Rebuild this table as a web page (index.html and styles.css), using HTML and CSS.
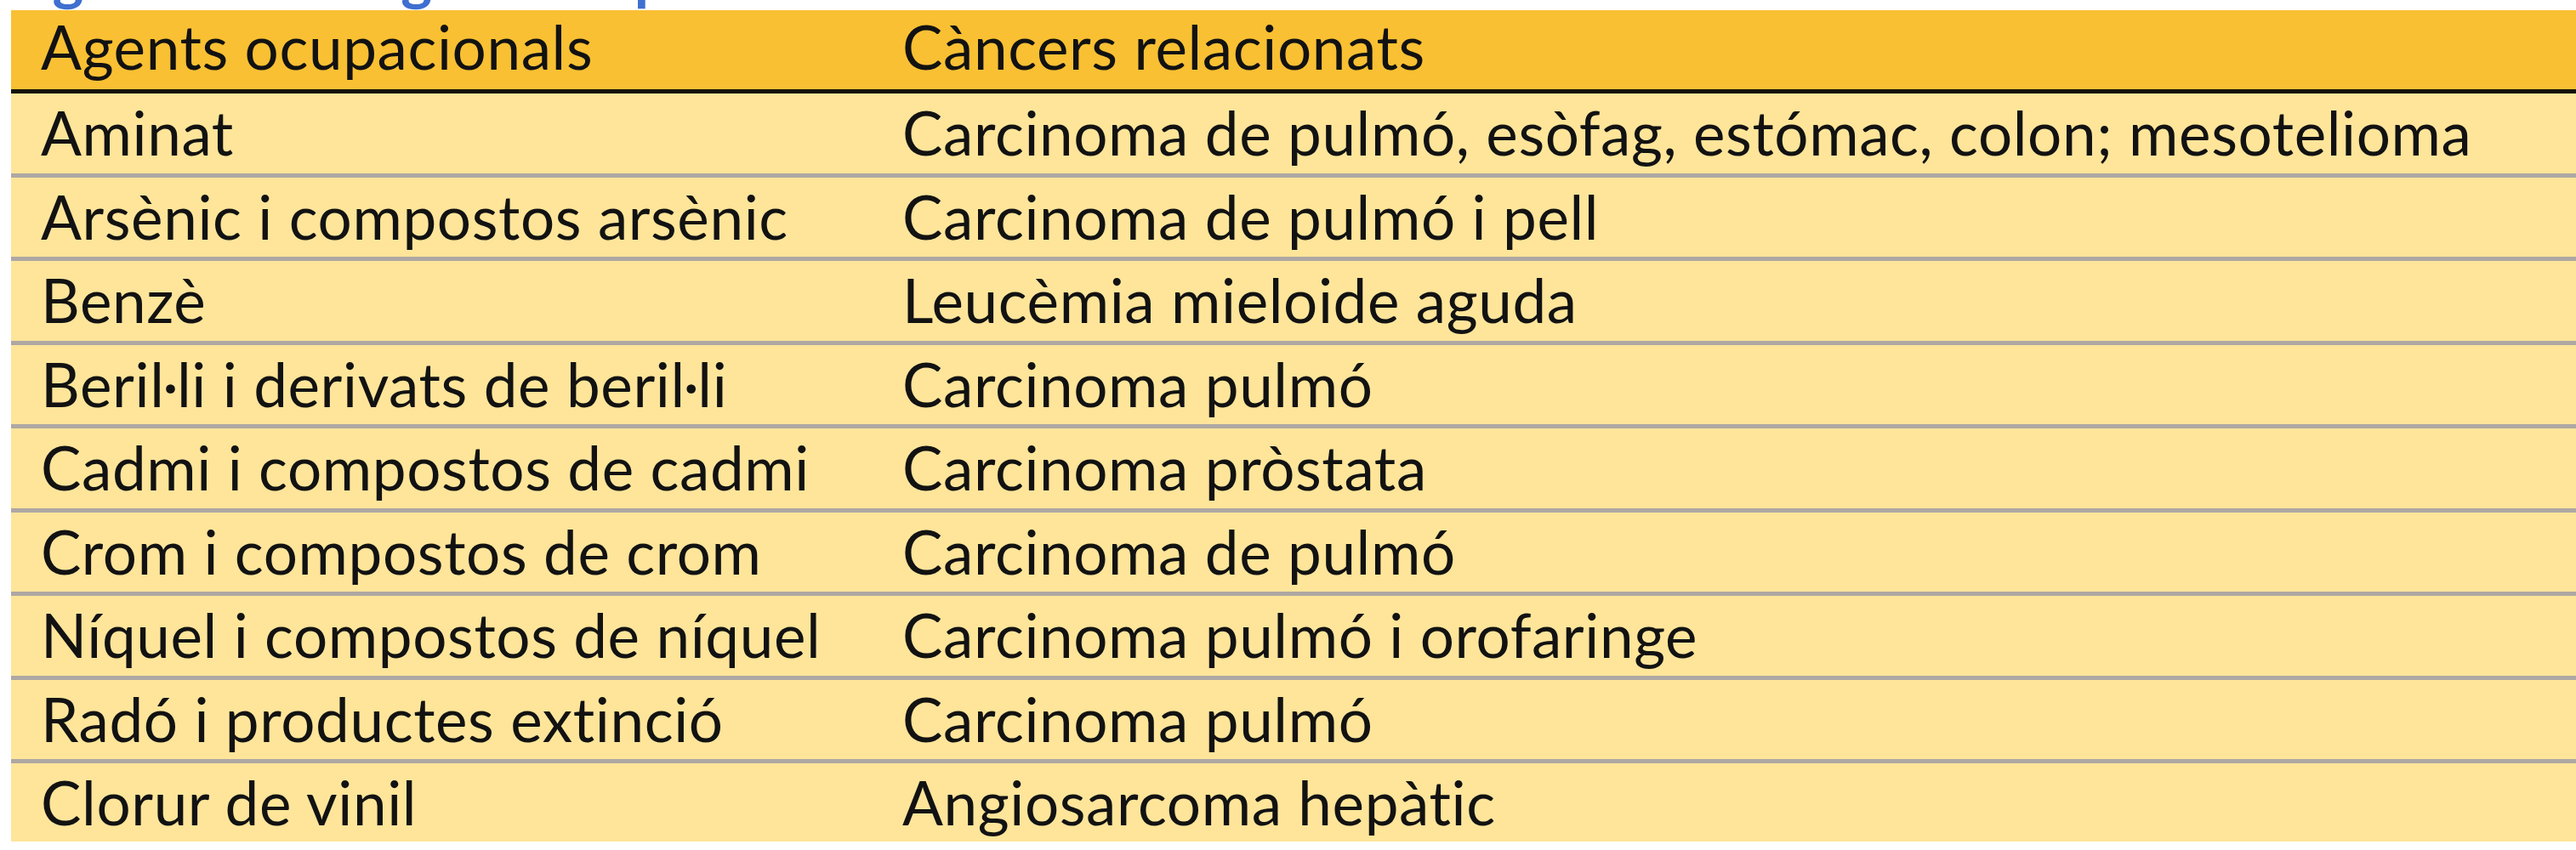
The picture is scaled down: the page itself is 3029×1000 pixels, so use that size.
FILE: index.html
```html
<!DOCTYPE html>
<html lang="ca">
<head>
<meta charset="utf-8">
<link rel="stylesheet" href="styles.css">
</head>
<body>
<div class="caption"><span>Agents cancerígens ocupacionals</span></div>
<div class="table">
  <div class="row head"><div class="cell">Agents ocupacionals</div><div class="cell">Càncers relacionats</div></div>
  <div class="row"><div class="cell">Aminat</div><div class="cell">Carcinoma de pulmó, esòfag, estómac, colon; mesotelioma</div></div>
  <div class="row"><div class="cell">Arsènic i compostos arsènic</div><div class="cell">Carcinoma de pulmó i pell</div></div>
  <div class="row"><div class="cell">Benzè</div><div class="cell">Leucèmia mieloide aguda</div></div>
  <div class="row"><div class="cell">Beril·li i derivats de beril·li</div><div class="cell">Carcinoma pulmó</div></div>
  <div class="row"><div class="cell">Cadmi i compostos de cadmi</div><div class="cell">Carcinoma pròstata</div></div>
  <div class="row"><div class="cell">Crom i compostos de crom</div><div class="cell">Carcinoma de pulmó</div></div>
  <div class="row"><div class="cell">Níquel i compostos de níquel</div><div class="cell">Carcinoma pulmó i orofaringe</div></div>
  <div class="row"><div class="cell">Radó i productes extinció</div><div class="cell">Carcinoma pulmó</div></div>
  <div class="row last"><div class="cell">Clorur de vinil</div><div class="cell">Angiosarcoma hepàtic</div></div>
</div>
</body>
</html>
```
FILE: styles.css
```css
html, body {
  margin: 0;
  padding: 0;
  background: #ffffff;
  overflow: hidden;
}
body {
  font-family: "Lato", "Open Sans", sans-serif;
  color: #121212;
}
.caption {
  height: 12px;
  overflow: hidden;
  display: flex;
  align-items: flex-end;
  padding-left: 13px;
  color: #3f6fd0;
  font-weight: 700;
  font-size: 70px;
  line-height: 1;
}
.caption span {
  margin-bottom: 6px;
  white-space: nowrap;
}
.table {
  margin-left: 13px;
  display: flex;
  flex-direction: column;
}
.row {
  display: grid;
  grid-template-columns: 1013px 1fr;
  height: 93.5px;
  border-bottom: 5px solid #aea8a3;
  background: #fee59a;
  font-size: 71px;
  letter-spacing: 0.6px;
  line-height: 83px;
  box-sizing: content-box;
}
.row.head {
  height: 93px;
  background: #f9c033;
  border-bottom-color: #151208;
}
.row.last {
  border-bottom: none;
  height: 92px;
}
.cell {
  padding: 4px 0 0 35px;
  white-space: nowrap;
}
.row.head .cell {
  padding-top: 1px;
}
```
